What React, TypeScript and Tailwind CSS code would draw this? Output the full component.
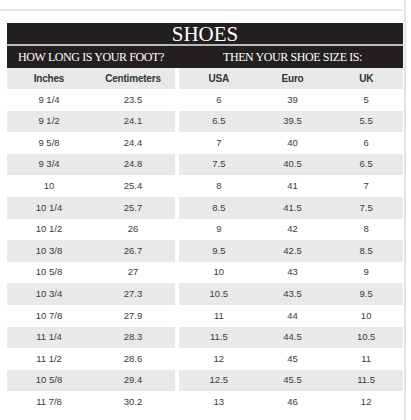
const sizes = [
  ["9 1/4", "23.5", "6", "39", "5"],
  ["9 1/2", "24.1", "6.5", "39.5", "5.5"],
  ["9 5/8", "24.4", "7", "40", "6"],
  ["9 3/4", "24.8", "7.5", "40.5", "6.5"],
  ["10", "25.4", "8", "41", "7"],
  ["10 1/4", "25.7", "8.5", "41.5", "7.5"],
  ["10 1/2", "26", "9", "42", "8"],
  ["10 3/8", "26.7", "9.5", "42.5", "8.5"],
  ["10 5/8", "27", "10", "43", "9"],
  ["10 3/4", "27.3", "10.5", "43.5", "9.5"],
  ["10 7/8", "27.9", "11", "44", "10"],
  ["11 1/4", "28.3", "11.5", "44.5", "10.5"],
  ["11 1/2", "28.6", "12", "45", "11"],
  ["10 5/8", "29.4", "12.5", "45.5", "11.5"],
  ["11 7/8", "30.2", "13", "46", "12"],
];

const SizeRow = ({ row, shaded }: { row: string[]; shaded: boolean }) => {
  const bg = shaded ? "bg-[#e9e9e9]" : "bg-white";
  return (
    <div className="flex h-[21.6px] gap-[4px] text-[9.5px] text-[#3a3a3a]">
      <div className={`w-[168px] grid grid-cols-2 items-center text-center ${bg}`}>
        <span>{row[0]}</span>
        <span>{row[1]}</span>
      </div>
      <div className={`w-[224px] pl-[3px] grid grid-cols-3 items-center text-center ${bg}`}>
        <span>{row[2]}</span>
        <span>{row[3]}</span>
        <span>{row[4]}</span>
      </div>
    </div>
  );
};

const App = () => {
  return (
    <div
      className="w-[411px] h-[420px] bg-white overflow-hidden"
      style={{ fontFamily: '"Liberation Sans", Arial, sans-serif' }}
    >
      <div className="w-[406px] h-full border-r-2 border-[#e4e4e4]">
        <div className="pt-[9px]">
          <div className="h-[2px] w-[402px] bg-[#e4e4e4]" />
        </div>
        <div className="ml-[7px] mt-[12px] w-[396px]">
          <div
            className="bg-[#231f20] h-[21px] flex items-center justify-center text-white text-[21px] leading-none pt-[2px]"
            style={{ fontFamily: '"Liberation Serif", "Times New Roman", serif' }}
          >
            SHOES
          </div>
          <div className="h-[2px] bg-[#b8b8b8]" />
          <div
            className="bg-[#231f20] h-[22px] flex gap-[4px] items-center text-white text-[12px] tracking-[-0.4px] leading-none"
            style={{ fontFamily: '"Liberation Serif", "Times New Roman", serif' }}
          >
            <div className="w-[168px] text-center">HOW LONG IS YOUR FOOT?</div>
            <div className="w-[224px] pl-[3px] text-center">THEN YOUR SHOE SIZE IS:</div>
          </div>
          <div className="flex h-[21px] gap-[4px] text-[10px] font-bold text-[#333] tracking-[-0.2px]">
            <div className="w-[168px] grid grid-cols-2 items-center text-center bg-[#e9e9e9]">
              <span>Inches</span>
              <span>Centimeters</span>
            </div>
            <div className="w-[224px] pl-[3px] grid grid-cols-3 items-center text-center bg-[#e9e9e9]">
              <span>USA</span>
              <span>Euro</span>
              <span>UK</span>
            </div>
          </div>
          {sizes.map((row, i) => (
            <SizeRow key={i} row={row} shaded={i % 2 === 1} />
          ))}
        </div>
      </div>
    </div>
  );
};

export default App;
